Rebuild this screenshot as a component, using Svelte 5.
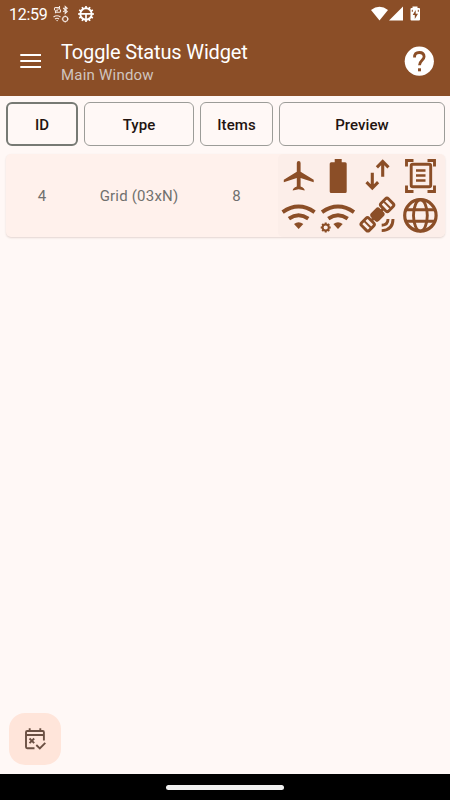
<script>
  const columns = ['ID', 'Type', 'Items', 'Preview'];
  const teeth = [0, 45, 90, 135, 180, 225, 270, 315];
  const cogTeeth = Array.from({ length: 12 }, (_, i) => i * 30);
</script>

<div class="screen">
  <header>
    <div class="status">
      <span class="clock">12:59</span>
      <svg class="mini" width="18" height="18" viewBox="0 0 18 18" fill="none" stroke="#f5e9e3" stroke-width="1.1">
        <path d="M2.500 5.200V3.500q0-1 1-1h4M7.500 1v3h-3M8.500 4.500v1.700q0 1-1 1h-4M3.500 8.200v-2.500h2.500M11.200 3l4 3.500-2 2V1.500l2 1.800-4 3.500" />
        <path d="M1.500 12q3.500-2.600 7 0M3 14q2-1.500 4 0" />
        <path d="M4.200 15h1.800l-.9 1.500z" fill="#f5e9e3" stroke="none" />
        <circle cx="13.200" cy="14" r="2.500" /><path d="M13.200 10.500v1M13.200 16.500v1M9.700 14h1M15.700 14h1" />
      </svg>
      <svg class="cog" width="18" height="18" viewBox="0 0 18 18" fill="none" stroke="#fff">
        <circle cx="9" cy="9" r="5.700" stroke-width="1.900" />
        {#each cogTeeth as a}
          <path d="M9 1.100v2" stroke-width="1.700" transform="rotate({a} 9 9)" />
        {/each}
        <path d="M4 8.800h10M9 9v5" stroke-width="1.700" />
      </svg>
      <span class="grow"></span>
      <svg width="52" height="18" viewBox="0 0 52 18" fill="#fff">
        <path d="M1 5Q9.500-1.700 18 5L9.500 15.500z" />
        <path d="M33 1.500v14H19z" />
        <path d="M42.500 1.500h5V3H49q1 0 1 1v10.500q0 1-1 1h-7.500q-1 0-1-1V4q0-1 1-1h1z" />
        <path d="M45.700 5l-3 5h2.100v4l3.200-5.300h-2.300z" fill="#8b4e27" />
        <path d="M42.300 4.800v2M48.300 4.800v2" stroke="#8b4e27" />
      </svg>
    </div>
    <div class="bar">
      <svg class="menu" width="22" height="18" viewBox="0 0 22 18" fill="none" stroke="#fff" stroke-width="2.200">
        <path d="M.3 3h20.700M.3 9h20.700M.3 15h20.700" />
      </svg>
      <div class="titles">
        <h1>Toggle Status Widget</h1>
        <p>Main Window</p>
      </div>
      <svg class="help" width="30" height="30" viewBox="0 0 30 30" fill="none">
        <circle cx="15.300" cy="15.200" r="14.600" fill="#fff" />
        <path d="M10.500 11.500Q10.500 6.500 15.300 6.500T20.100 10.800C20.100 14.200 15.500 14.600 15.500 19.300" stroke="#8b4e27" stroke-width="2.800" />
        <path d="M14 22.300h3v3h-3z" fill="#8b4e27" />
      </svg>
    </div>
  </header>

  <main>
    <div class="row heads">
      {#each columns as name, i}
        <button class:active={i === 0}>{name}</button>
      {/each}
    </div>

    <div class="row card">
      <span>4</span>
      <span>Grid (03xN)</span>
      <span>8</span>
      <div class="preview">
        <svg viewBox="0 0 40 40">
          <path class="fill" d="M18.800 7q0-2 1.900-2t1.900 2v8.700l13.100 8v2.500l-13.100-4.200v8.400q4 1.200 4.100 4.200l-6-1.300-6 1.300q.1-3 4.100-4.200V22L5.800 26.200v-2.500l13-8z" />
        </svg>
        <svg viewBox="0 0 40 40">
          <path class="fill" d="M16.700 3h7v3.300h3.500q1.500 0 1.500 1.500v27.700q0 1.500-1.500 1.500h-14q-1.500 0-1.500-1.500V7.800q0-1.500 1.500-1.500h3.500z" />
        </svg>
        <svg viewBox="0 0 40 40">
          <path class="line" d="M24.700 20.700V5.800M18.900 11.300l5.800-5.800 5.800 5.800M14.300 16.700V32M8.500 26.200l5.800 5.800 5.800-5.800" style:stroke-width="3.100" />
        </svg>
        <svg viewBox="0 0 40 40">
          <path class="line" d="M6.500 10.500v-6h7M27.500 4.500h7v6M34.500 29.500v6h-7M13.500 35.500h-7v-6" />
          <rect class="line" x="11.200" y="8.200" width="19.500" height="22.600" rx="1.500" />
          <path class="line" d="M16 14.500h9.500M16 19.500h9.500M16 24.500h9.500" style:stroke-width="2.700" />
        </svg>
        <svg viewBox="0 0 40 40">
          <path class="line wifi" d="M4.600 16.200Q20.600 5 36.600 16.200M10.900 22.600Q20.600 15.900 30.300 22.600" />
          <path class="fill" d="M16 28q4.600-3.400 9.300 0l-4.700 5z" />
        </svg>
        <svg viewBox="0 0 40 40">
          <path class="line wifi" d="M4 16.200Q20 5 36 16.200M10.300 22.600Q20 15.900 29.700 22.600" />
          <path class="fill" d="M15.400 28q4.600-3.400 9.300 0L20 33z" />
          <circle class="line" cx="7.700" cy="31.500" r="3.100" style:stroke-width="2" />
          {#each teeth as a}
            <path class="line" style:stroke-width="2" d="M7.700 26.500v1.500" transform="rotate({a} 7.700 31.500)" />
          {/each}
        </svg>
        <svg viewBox="0 0 40 40">
          <g transform="rotate(-45 19.400 18.600)">
            <rect class="fill" x="13.200" y="13" width="12.400" height="11.200" rx="3" />
            <rect class="line" x="28" y="13.200" width="10.300" height="10.800" rx="2" />
            <rect class="line" x=".5" y="13.200" width="10.300" height="10.800" rx="2" />
            <path class="line" d="M33.200 14v9M5.600 14v9" style:stroke-width="2" />
            <path class="line" d="M11 18.600h17" />
          </g>
          <path class="line" d="M30 23q0 6-6.300 6.300M35 23q0 11.200-11.300 11.600" />
        </svg>
        <svg viewBox="0 0 40 40">
          <circle class="line" cx="20.400" cy="19.400" r="15.700" style:stroke-width="3.200" />
          <ellipse class="line" cx="20.400" cy="19.400" rx="6.900" ry="15.700" />
          <path class="line" d="M5.500 13.700h29.800M5.500 25.200h29.800" />
        </svg>
      </div>
    </div>
  </main>

  <div class="actions">
    <button class="fab" aria-label="Schedule">
      <svg width="24" height="26" viewBox="0 0 24 26" fill="none" stroke="#6b5043" stroke-width="1.900">
        <path d="M11.500 22.300H4.200q-1.200 0-1.200-1.200V6.200q0-1.200 1.200-1.200h15.500q1.200 0 1.200 1.200v8.400M3 9h18M6.700 2.200v3M17.300 2.200v3M6.500 12.500l4.700 4.700M11.200 12.500l-4.700 4.700M13.300 19l3.500 3.400 5.500-5.600" />
      </svg>
    </button>
  </div>
  <footer><div class="pill"></div></footer>
</div>

<style>
  :global(body) { margin: 0; }
  .screen {
    width: 450px; height: 800px; display: flex; flex-direction: column;
    background: #fff8f6; font-family: Roboto, sans-serif; overflow: hidden;
  }
  svg { display: block; flex: none; }
  header { height: 96px; background: #8b4e27; color: #fff; flex: none; }
  .status { height: 27px; display: flex; align-items: center; padding: 0 28px 0 9px; }
  .clock { font-size: 16px; line-height: 20px; width: 43px; margin-top: 2px; letter-spacing: -.25px; }
  .cog { margin-left: 7px; }
  .grow { flex: 1; }
  .bar { height: 68px; display: flex; align-items: center; padding: 0 16px 0 20px; box-sizing: border-box; }
  .titles { flex: 1; margin-left: 19px; padding-top: 4px; }
  h1 { margin: 0; font-size: 20px; line-height: 25px; font-weight: 400; letter-spacing: -.15px; }
  p { margin: 0; font-size: 15px; line-height: 21px; color: #d0c5bf; letter-spacing: .22px; }
  main { flex: 1; padding: 6px 5px 0 6px; }
  .row { display: grid; grid-template-columns: 72px 110px 73px 166px; column-gap: 6px; width: 439px; }
  .heads button {
    height: 44px; margin: 0; padding: 1px 0 0; background: transparent; border: 1px solid #9c9c98; border-radius: 6px;
    font: 500 15px Roboto, sans-serif; color: #231410; letter-spacing: .08px;
  }
  .heads .active { border: 2px solid #777a74; }
  .card {
    margin-top: 8px; height: 83px; border-radius: 5px; background: #fff1ec; align-items: center;
    box-shadow: 0 1px 2px #52231529; overflow: hidden;
  }
  .card > span { text-align: center; font-size: 15px; color: #70706e; letter-spacing: .2px; padding-top: 1px; }
  .preview {
    height: 83px; box-sizing: border-box; padding-top: 2px; background: #fceee9; border-radius: 5px;
    display: grid; grid-template-columns: 40px 40px 42px 40px; grid-template-rows: 40px 40px; margin-left: -1px;
  }
  .preview svg { width: 40px; height: 40px; }
  .fill { fill: #8b4e27; }
  .line { fill: none; stroke: #8b4e27; stroke-width: 2.9; }
  .wifi { stroke-width: 3.9; }
  .actions { padding: 0 9px 9px; }
  .fab {
    display: flex; align-items: center; justify-content: center; width: 52px; height: 52px; padding: 0;
    border: 0; border-radius: 16px; background: #ffe5da;
  }
  footer { height: 26px; background: #000; flex: none; display: flex; justify-content: center; align-items: center; }
  .pill { width: 118px; height: 5px; border-radius: 3px; background: #f0f0f0; }
</style>
